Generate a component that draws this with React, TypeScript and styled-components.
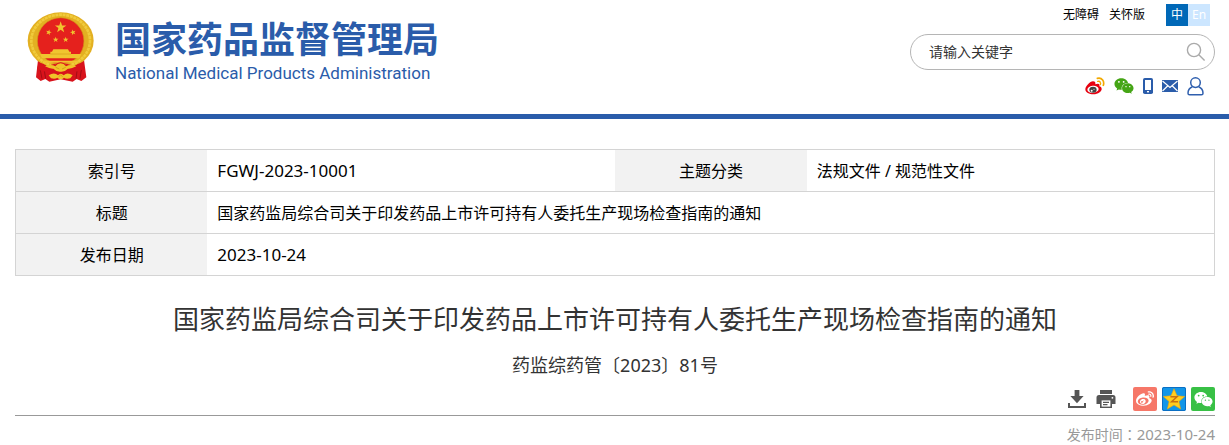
import React from 'react';
import styled, { createGlobalStyle } from 'styled-components';
import { FaWeixin, FaWeibo } from 'react-icons/fa6';

const GlobalStyle = createGlobalStyle`
  * { box-sizing: border-box; }
  body {
    margin: 0;
    background: #fff;
    color: #000;
    font-family: "Noto Sans", "Noto Sans CJK SC", sans-serif;
    font-size: 16px;
  }
  a { color: inherit; text-decoration: none; }
  h1, p { margin: 0; font-weight: 400; }
`;

const Header = styled.header`
  display: flex;
  justify-content: space-between;
  align-items: flex-start;
  padding: 4px 14px 18px 26px;
  border-bottom: 5px solid #2a5caa;
`;

const Brand = styled.a`
  display: flex;
  gap: 19px;
  padding-top: 6px;
  color: #2a5caa;
`;

const BrandNames = styled.span`
  display: flex;
  flex-direction: column;
  gap: 2px;
  padding-top: 5px;
  white-space: nowrap;
`;

const BrandName = styled.span`
  font: 700 36px/44px "Noto Sans CJK SC", sans-serif;
`;

const BrandEnglish = styled.span`
  font: 400 17px/24px Roboto, sans-serif;
`;

const Tools = styled.div`
  width: 305px;
`;

const TopLinks = styled.nav`
  display: flex;
  justify-content: flex-end;
  gap: 10px;
  padding-right: 5px;
  font-size: 12px;
  line-height: 22px;
`;

const Languages = styled.span`
  display: flex;
  margin-left: 11px;
`;

const Language = styled.a<{ $active?: boolean }>`
  width: 22px;
  text-align: center;
  color: #fff;
  background: ${(p) => (p.$active ? '#0068b7' : '#cce6ff')};
`;

const Search = styled.form`
  display: flex;
  align-items: center;
  height: 36px;
  margin-top: 8px;
  padding: 0 8px 0 18px;
  border: 1px solid #b5b5b5;
  border-radius: 18px;
`;

const SearchInput = styled.input`
  flex: 1;
  min-width: 0;
  padding: 0;
  border: 0;
  outline: 0;
  background: none;
  color: #333;
  font: 14px/20px "Noto Sans", "Noto Sans CJK SC", sans-serif;
  &::placeholder { color: #333; opacity: 1; }
`;

const IconButton = styled.button`
  display: flex;
  padding: 0;
  border: 0;
  background: none;
  cursor: pointer;
`;

const Channels = styled.nav`
  display: flex;
  justify-content: flex-end;
  align-items: center;
  gap: 9px;
  height: 20px;
  margin-top: 6px;
  padding-right: 11px;
  a { display: flex; }
`;

const Main = styled.main`
  padding: 30px 14px 0 15px;
`;

const InfoTable = styled.table`
  width: 100%;
  table-layout: fixed;
  border-collapse: collapse;
  border: 1px solid #d4d4d4;
  line-height: 24px;
  tr { height: 42px; border-bottom: 1px solid #d4d4d4; }
`;

const Label = styled.th`
  width: 16%;
  padding: 0;
  background: #f2f2f2;
  font-weight: 400;
`;

const Value = styled.td<{ $latin?: boolean }>`
  padding: 0 10px;
  font-size: ${(p) => (p.$latin ? 17 : 16)}px;
`;

const Title = styled.h1`
  margin-top: 23px;
  color: #333;
  font-size: 26px;
  line-height: 40px;
  text-align: center;
`;

const DocNumber = styled.p`
  margin-top: 12px;
  color: #333;
  font-size: 18px;
  line-height: 28px;
  text-align: center;
`;

const Actions = styled.div`
  display: flex;
  justify-content: flex-end;
  align-items: center;
  padding: 8px 0 4px;
  border-bottom: 1px solid #999;
`;

const PageActions = styled.div`
  display: flex;
  gap: 9px;
  margin-right: 17px;
`;

const Shares = styled.div`
  display: flex;
  gap: 5px;
`;

const Share = styled.a<{ $color: string }>`
  display: flex;
  align-items: center;
  justify-content: center;
  width: 24px;
  height: 24px;
  border-radius: 2px;
  color: #fff;
  background: ${(p) => p.$color};
`;

const Published = styled.p`
  padding-top: 7px;
  color: #999;
  font-size: 14px;
  line-height: 22px;
  text-align: right;
  time { font-size: 15px; }
`;

const Colon = styled.span`
  font-family: "Noto Sans CJK TC", sans-serif;
`;

const star = (cx: number, cy: number, r: number, turn = 0) =>
  Array.from({ length: 10 }, (_, i) => {
    const a = ((i * 36 - 90 + turn) * Math.PI) / 180;
    const d = i % 2 ? r * 0.4 : r;
    return `${(cx + d * Math.cos(a)).toFixed(1)},${(cy + d * Math.sin(a)).toFixed(1)}`;
  }).join(' ');

const Emblem = () => (
  <svg width="70" height="74" viewBox="48 30 210 222" aria-hidden="true">
    <path d="M84 180 L78 232 L92 243 L106 237 L118 245 L152 238 L188 245 L200 237 L214 243 L229 232 L222 180 Z" fill="#d8131c" />
    <path d="M88 196 L96 236 M102 206 L107 236 M216 196 L210 236 M202 206 L198 236" stroke="#a30d14" strokeWidth="3" fill="none" />
    <ellipse cx="152" cy="122" rx="99" ry="85" fill="#e3b022" />
    <ellipse cx="152" cy="122" rx="88" ry="78" fill="none" stroke="#f0cb3c" strokeWidth="8" strokeDasharray="9 2" />
    <circle cx="152" cy="123" r="70" fill="#e5211d" stroke="#d39a18" strokeWidth="2" />
    <g fill="#f0c52f">
      <polygon points={star(152, 82, 18)} />
      <polygon points={star(116, 97, 9, 15)} />
      <polygon points={star(189, 97, 9, -15)} />
      <polygon points={star(137, 119, 9)} />
      <polygon points={star(167, 119, 9)} />
      <path d="M130 148 H174 L178 155 H183 V162 H214 L208 175 H96 L90 162 H121 V155 H126 Z" />
      <path d="M96 182 H208 L201 188 H103 Z" />
    </g>
    <path d="M121 162 H183" stroke="#d39a18" strokeWidth="2" />
    <path d="M86 187 Q103 191 113 200 Q126 190 138 193 Q152 181 166 193 Q179 190 191 200 Q202 191 218 187 L222 205 Q205 220 188 211 Q170 221 152 219 Q133 221 116 211 Q99 220 82 205 Z" fill="#d8131c" />
    <path d="M105 199 Q124 191 136 199 Q143 190 152 190 Q162 190 168 199 Q181 191 199 199 Q184 207 174 206 Q164 216 152 215 Q140 216 130 206 Q120 207 105 199 Z" fill="#f0c329" />
    <path d="M116 226 Q133 215 144 226 Q152 217 161 226 Q172 215 188 226 L181 235 Q168 238 162 233 Q152 243 142 233 Q136 238 123 235 Z" fill="#f0c329" />
    <path d="M137 202 L148 207 M167 202 L156 207 M146 230 L152 225 L158 230" stroke="#c98b12" strokeWidth="2" fill="none" />
  </svg>
);

const SearchIcon = () => (
  <svg width="20" height="20" viewBox="0 0 20 20" fill="none" stroke="#aaa" strokeWidth="1.4" aria-hidden="true">
    <circle cx="8" cy="8" r="6.6" />
    <path d="M12.8 12.8 L18.6 18.6" />
  </svg>
);

const WeiboColor = () => (
  <svg width="20" height="18" viewBox="0 0 60 54" aria-hidden="true">
    <path d="M24 13 C15 13 1 28 1 37 C1 47 13 52 25 52 C40 52 50 43 50 36 C50 31 46 29 43 28 C45 22 42 18 31 22 C32 16 30 13 24 13 Z" fill="#e6000f" />
    <ellipse cx="24" cy="37" rx="17" ry="10.5" fill="#fff" transform="rotate(-7 24 37)" />
    <ellipse cx="24" cy="38" rx="11" ry="9" fill="#444" />
    <circle cx="20" cy="41" r="3" fill="#fff" />
    <circle cx="27" cy="37" r="1.6" fill="#fff" />
    <path d="M37 4 Q47 1 53 9 Q58 16 55 25" stroke="#f2a900" strokeWidth="5" fill="none" strokeLinecap="round" />
    <path d="M38 13 Q44 12 46 16 Q48 19 46 23" stroke="#f2a900" strokeWidth="4" fill="none" strokeLinecap="round" />
  </svg>
);

const PhoneIcon = () => (
  <svg width="10" height="16" viewBox="0 0 10 16" aria-hidden="true">
    <rect width="10" height="16" rx="1.8" fill="#2a5caa" />
    <rect x="2" y="2" width="6" height="10" fill="#fff" />
    <rect x="4" y="13" width="2" height="1.4" fill="#fff" />
  </svg>
);

const MailIcon = () => (
  <svg width="16" height="12" viewBox="0 0 16 12" aria-hidden="true">
    <rect width="16" height="12" fill="#2a5caa" />
    <path d="M0.5 1 L8 7.4 L15.5 1 M0.5 11 L5.6 6 M15.5 11 L10.4 6" stroke="#fff" strokeWidth="1.2" fill="none" />
  </svg>
);

const UserIcon = () => (
  <svg width="17" height="19" viewBox="0 0 17 19" fill="none" stroke="#2f5fae" strokeWidth="1.5" aria-hidden="true">
    <circle cx="8.5" cy="5.6" r="4.8" />
    <path d="M5.4 9.8 C2.4 11 1 13.2 1 16.2 Q1 17.8 2.6 17.8 H14.4 Q16 17.8 16 16.2 C16 13.2 14.6 11 11.6 9.8" />
  </svg>
);

const DownloadIcon = () => (
  <svg width="20" height="20" viewBox="0 0 20 20" fill="#555" aria-hidden="true">
    <path d="M7.6 1 H12.4 V7 H16.6 L10 14.2 L3.4 7 H7.6 Z" />
    <path d="M1 14 H3 V17 H17 V14 H19 V19 H1 Z" />
  </svg>
);

const PrintIcon = () => (
  <svg width="20" height="20" viewBox="0 0 20 20" aria-hidden="true">
    <path d="M4 1 H16 V5 H4 Z M3 6 H17 Q19.5 6 19.5 8.5 V15 H16 V19 H4 V15 H0.5 V8.5 Q0.5 6 3 6 Z" fill="#555" />
    <path d="M5.6 11.4 H14.4 V17.6 H5.6 Z" fill="#fff" />
    <path d="M7 13.3 H13 M7 15.7 H11.5" stroke="#555" strokeWidth="1.3" />
    <circle cx="16.4" cy="8.8" r="0.9" fill="#fff" />
  </svg>
);

const QzoneIcon = () => (
  <svg width="24" height="24" viewBox="0 0 24 24" aria-hidden="true">
    <rect x="0.5" y="0.5" width="23" height="23" rx="1.5" fill="#1296e8" stroke="#0a6fc4" />
    <path d="M12 1.8 L15 8.8 L22.6 9.5 L16.9 14.5 L18.6 22 L12 18 L5.4 22 L7.1 14.5 L1.4 9.5 L9 8.8 Z" fill="#ffce1f" stroke="#f5a800" strokeWidth="0.6" strokeLinejoin="round" />
    <path d="M8.4 9.8 H15 L9.6 14.8 H16" fill="none" stroke="#c8700f" strokeWidth="1.5" />
  </svg>
);

export default function App() {
  return (
    <>
      <GlobalStyle />
      <Header>
        <Brand href="#">
          <Emblem />
          <BrandNames>
            <BrandName>国家药品监督管理局</BrandName>
            <BrandEnglish>National Medical Products Administration</BrandEnglish>
          </BrandNames>
        </Brand>
        <Tools>
          <TopLinks>
            <a href="#">无障碍</a>
            <a href="#">关怀版</a>
            <Languages>
              <Language href="#" $active>中</Language>
              <Language href="#">En</Language>
            </Languages>
          </TopLinks>
          <Search role="search">
            <SearchInput type="text" aria-label="请输入关键字" placeholder="请输入关键字" />
            <IconButton type="button" aria-label="搜索"><SearchIcon /></IconButton>
          </Search>
          <Channels>
            <a href="#" aria-label="微博"><WeiboColor /></a>
            <a href="#" aria-label="微信"><FaWeixin size={20} color="#45a516" /></a>
            <a href="#" aria-label="手机"><PhoneIcon /></a>
            <a href="#" aria-label="邮箱"><MailIcon /></a>
            <a href="#" aria-label="用户"><UserIcon /></a>
          </Channels>
        </Tools>
      </Header>
      <Main>
        <InfoTable>
          <colgroup>
            <col width="16%" />
            <col width="34%" />
            <col width="16%" />
            <col width="34%" />
          </colgroup>
          <tbody>
            <tr>
              <Label scope="row">索引号</Label>
              <Value $latin>FGWJ-2023-10001</Value>
              <Label scope="row">主题分类</Label>
              <Value>法规文件 / 规范性文件</Value>
            </tr>
            <tr>
              <Label scope="row">标题</Label>
              <Value colSpan={3}>国家药监局综合司关于印发药品上市许可持有人委托生产现场检查指南的通知</Value>
            </tr>
            <tr>
              <Label scope="row">发布日期</Label>
              <Value $latin colSpan={3}>2023-10-24</Value>
            </tr>
          </tbody>
        </InfoTable>
        <Title>国家药监局综合司关于印发药品上市许可持有人委托生产现场检查指南的通知</Title>
        <DocNumber>药监综药管〔2023〕81号</DocNumber>
        <Actions>
          <PageActions>
            <IconButton type="button" aria-label="下载"><DownloadIcon /></IconButton>
            <IconButton type="button" aria-label="打印"><PrintIcon /></IconButton>
          </PageActions>
          <Shares>
            <Share href="#" aria-label="分享到微博" $color="#f67768"><FaWeibo size={18} /></Share>
            <Share href="#" aria-label="分享到QQ空间" $color="#1296e8"><QzoneIcon /></Share>
            <Share href="#" aria-label="分享到微信" $color="#38c045"><FaWeixin size={19} /></Share>
          </Shares>
        </Actions>
        <Published>发布时间<Colon>：</Colon><time>2023-10-24</time></Published>
      </Main>
    </>
  );
}
